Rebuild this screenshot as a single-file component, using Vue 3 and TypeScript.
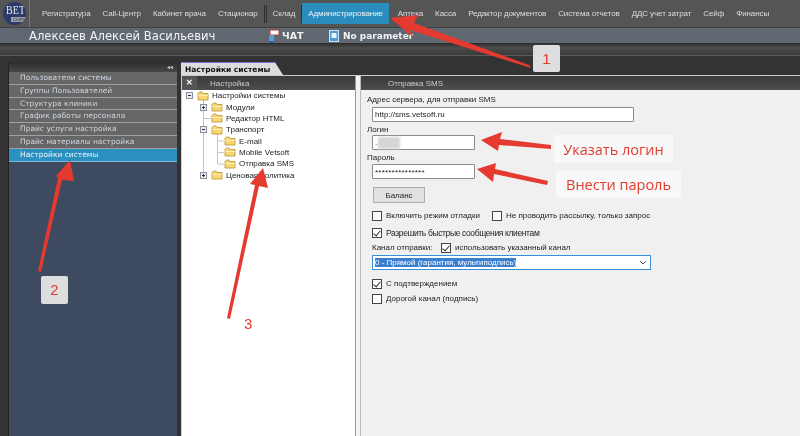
<template>
  <div class="app">
    <header class="topbar">
      <div class="logo">
        <span class="logo-bet">BET</span>
        <span class="logo-sub">СОФТ</span>
      </div>
      <nav class="nav">
        <template v-for="item in navItems" :key="item.label">
          <span v-if="item.sep" class="nav-sep" :class="item.sep" />
          <a class="nav-item" :class="{ active: item.active }">{{ item.label }}</a>
        </template>
      </nav>
    </header>

    <div class="namebar">
      <span class="user-name">Алексеев Алексей Васильевич</span>
      <span class="chat">
        <svg width="13" height="14" viewBox="0 0 13 14">
          <rect x="3" y="1" width="9" height="5" rx="1" fill="#fff" stroke="#c0392b" />
          <rect x="2" y="6" width="5" height="6" fill="#5b9bd5" />
          <rect x="3" y="12" width="3" height="2" fill="#2d5f96" />
        </svg>
        ЧАТ
      </span>
      <span class="param">
        <svg width="10" height="12" viewBox="0 0 10 12">
          <rect x="0.5" y="0.5" width="9" height="11" fill="#4f9ad8" stroke="#cfe4f5" />
          <rect x="2.5" y="3" width="5" height="5" fill="#e8f3fb" />
        </svg>
        No parameter
      </span>
    </div>
    <div class="band" />

    <main class="content">
      <aside class="sidebar">
        <div class="side-head"><span class="collapse">◂◂</span></div>
        <ul class="side-list">
          <li v-for="m in menu" :key="m" class="side-item" :class="{ selected: m === 'Настройки системы' }">{{ m }}</li>
        </ul>
      </aside>

      <section class="workspace">
        <div class="tab">Настройки системы</div>
        <div class="panes">
          <div class="tree-pane">
            <div class="pane-head">
              <span class="close">✕</span>
              <span class="tree-title">Настройка</span>
            </div>
            <div class="tree">
              <svg class="tree-lines" width="60" height="90" viewBox="0 0 60 90">
                <path
                  d="M21.5 10V85M21.5 28.5H29M35.5 44V74M35.5 51H42M35.5 62.5H42M35.5 74H42"
                  stroke="#c4c4c4"
                  fill="none"
                />
              </svg>
              <div v-for="row in tree" :key="row.label" class="tree-row" :class="'depth-' + row.depth">
                <span class="expander" :class="{ hidden: !row.toggle }">
                  <svg width="7" height="7" viewBox="0 0 7 7">
                    <rect x="0.5" y="0.5" width="6" height="6" fill="#e8edf5" stroke="#8a8f9a" />
                    <path d="M2 3.5H5" stroke="#334" />
                    <path v-if="row.toggle === 'plus'" d="M3.5 2V5" stroke="#334" />
                  </svg>
                </span>
                <svg class="folder" width="12" height="10" viewBox="0 0 12 10">
                  <path d="M1 2.5 2.5 1H5L6 2.5H11V9H1Z" fill="#f7d774" stroke="#b8932e" stroke-width="0.8" />
                  <path d="M1 4.5H11" stroke="#fff3c0" stroke-width="0.8" />
                </svg>
                <span class="tree-label">{{ row.label }}</span>
              </div>
            </div>
          </div>

          <div class="splitter" />

          <div class="form-pane">
            <div class="pane-head form-head">Отправка SMS</div>
            <form class="form" @submit.prevent>
              <label class="lbl">Адрес сервера, для отправки SMS</label>
              <div class="input url">http://sms.vetsoft.ru</div>
              <label class="lbl lbl-next">Логин</label>
              <div class="input short"><span class="masked-dot">.</span><span class="masked" /></div>
              <label class="lbl lbl-next">Пароль</label>
              <div class="input short pass">***************</div>
              <button class="btn" type="button">Баланс</button>

              <div class="check-row first">
                <span class="check-item debug"><i class="box" />Включить режим отладки</span>
                <span class="check-item"><i class="box" />Не проводить рассылку, только запрос</span>
              </div>
              <div class="check-row">
                <span class="check-item wide"><i class="box on" />Разрешить быстрые сообщения клиентам</span>
              </div>
              <div class="channel-row">
                <span class="channel-lbl">Канал отправки:</span>
                <span class="check-item"><i class="box on" />использовать указанный канал</span>
              </div>
              <div class="select">
                <span class="select-value">0 - Прямой (гарантия, мультиподпись)</span>
                <svg width="8" height="5" viewBox="0 0 8 5"><path d="M1 1 4 4 7 1" stroke="#555" fill="none" /></svg>
              </div>
              <div class="check-row confirm">
                <span class="check-item"><i class="box on" />С подтверждением</span>
              </div>
              <div class="check-row tight">
                <span class="check-item"><i class="box" />Дорогой канал (подпись)</span>
              </div>
            </form>
          </div>
        </div>
      </section>
    </main>

    <!-- пометки поверх скриншота -->
    <svg class="arrows" width="800" height="436" viewBox="0 0 800 436">
      <g v-for="a in arrows" :key="a" fill="#e53a2f">
        <polygon :points="a" />
      </g>
    </svg>
    <span class="badge b1">1</span>
    <span class="badge b2">2</span>
    <span class="step3">3</span>
    <span class="note n1">Указать логин</span>
    <span class="note n2">Внести пароль</span>
  </div>
</template>

<script setup lang="ts">
interface NavItem {
  label: string
  active?: boolean
  sep?: 'double' | 'single'
}

interface TreeRow {
  label: string
  depth: number
  toggle?: 'plus' | 'minus'
}

const navItems: NavItem[] = [
  { label: 'Регистратура' },
  { label: 'Call-Центр' },
  { label: 'Кабинет врача' },
  { label: 'Стационар' },
  { label: 'Склад', sep: 'double' },
  { label: 'Администрирование', active: true, sep: 'single' },
  { label: 'Аптека' },
  { label: 'Касса' },
  { label: 'Редактор документов' },
  { label: 'Система отчетов' },
  { label: 'ДДС учет затрат' },
  { label: 'Сейф' },
  { label: 'Финансы' }
]

const menu = [
  'Пользователи системы',
  'Группы Пользователей',
  'Структура клиники',
  'График работы персонала',
  'Прайс услуги настройка',
  'Прайс материалы настройка',
  'Настройки системы'
]

const tree: TreeRow[] = [
  { label: 'Настройки системы', depth: 0, toggle: 'minus' },
  { label: 'Модули', depth: 1, toggle: 'plus' },
  { label: 'Редактор HTML', depth: 1 },
  { label: 'Транспорт', depth: 1, toggle: 'minus' },
  { label: 'E-mail', depth: 2 },
  { label: 'Mobile Vetsoft', depth: 2 },
  { label: 'Отправка SMS', depth: 2 },
  { label: 'Ценовая политика', depth: 1, toggle: 'plus' }
]

const arrows = [
  '529,65 531,68 410,30 413,37 390,18 418,15 414,23',
  '38,271 41,272 62,180 74,181 70,160 56,176 58,178',
  '227,318 230,319 259,186 268,188 263,168 250,184 255,185',
  '551,145 551,149 499,145 498,151 481,140 502,132 500,139',
  '548,181 547,185 494,174 493,182 477,169 496,163 495,169'
]
</script>

<style>
html,
body {
  margin: 0;
  background: #333;
}
</style>

<style scoped>
.app {
  position: relative;
  width: 800px;
  height: 436px;
  overflow: hidden;
  display: flex;
  flex-direction: column;
  background: #333;
  font-family: 'Liberation Sans', Arial, sans-serif;
  font-size: 8px;
  filter: blur(0.3px);
}
.topbar {
  height: 27px;
  flex: none;
  display: flex;
  align-items: center;
  background: #555;
  border-bottom: 1px solid #404040;
}
.logo {
  width: 23px;
  height: 23px;
  margin: 0 3px 0 3px;
  border-radius: 50%;
  background: #2c3a68;
  display: flex;
  flex-direction: column;
  align-items: flex-end;
  overflow: hidden;
  flex: none;
}
.logo-bet {
  font-family: 'Liberation Serif', serif;
  font-size: 10px;
  line-height: 11px;
  margin-top: 2px;
  padding-right: 1px;
  color: #e6e6ea;
  transform: scaleY(1.2);
}
.logo-sub {
  font-size: 4px;
  line-height: 5px;
  margin-top: 2px;
  width: 15px;
  text-align: center;
  background: #9aa0ac;
  color: #223;
}
.nav {
  height: 27px;
  flex: 1;
  display: flex;
  align-items: center;
  padding-left: 6px;
  border-left: 1px solid #777;
  color: #ddd;
  letter-spacing: -0.1px;
}
.nav-item {
  padding: 0 6px;
  white-space: nowrap;
}
.nav-item.active {
  height: 21px;
  line-height: 21px;
  margin-right: 3px;
  background: #2b8dbd;
  color: #e8f2f8;
}
.nav-sep {
  height: 18px;
  border-left: 1px solid #2e2e2e;
}
.nav-sep.double {
  width: 1px;
  border-right: 1px solid #2e2e2e;
}
.nav-sep.single {
  width: 0;
}
.namebar {
  height: 15px;
  flex: none;
  display: flex;
  align-items: center;
  background: #5f6871;
  color: #f2f2f2;
  font-family: 'DejaVu Sans', sans-serif;
  font-size: 11.6px;
}
.user-name {
  margin-left: 29px;
  width: 238px;
  white-space: nowrap;
}
.chat {
  width: 62px;
  display: flex;
  align-items: center;
  gap: 2px;
  font-weight: 700;
  font-size: 9.5px;
}
.param {
  display: flex;
  align-items: center;
  gap: 4px;
  font-weight: 700;
  font-size: 9px;
}
.band {
  height: 12px;
  flex: none;
  background: linear-gradient(#2c2c2c, #4c4c4c 40%, #3a3a3a);
  border-bottom: 1px solid #5c5c5c;
}
.content {
  flex: 1;
  min-height: 0;
  display: flex;
  padding: 6px 0 0 8px;
  background: #333;
}
.sidebar {
  width: 168px;
  flex: none;
  display: flex;
  flex-direction: column;
  background: #3d4a60;
  border-left: 1px solid #222;
}
.side-head {
  height: 10px;
  flex: none;
  background: linear-gradient(#2e2e2e, #474747);
  color: #ccc;
  font-size: 6px;
  line-height: 10px;
  text-align: right;
  padding-right: 4px;
}
.side-list {
  list-style: none;
  margin: 0;
  padding: 0;
}
.side-item {
  height: 11.8px;
  line-height: 12px;
  padding-left: 11px;
  background: #666;
  border-bottom: 1px solid #a0a0a0;
  color: #cdd6de;
  font-family: 'DejaVu Sans', sans-serif;
  font-size: 7.5px;
}
.side-item.selected {
  background: #2a90c0;
  color: #eef6fb;
  border-bottom-color: #7fb8d6;
}
.workspace {
  flex: 1;
  min-width: 0;
  display: flex;
  flex-direction: column;
  padding-left: 4px;
}
.tab {
  width: 98px;
  height: 12px;
  flex: none;
  padding-left: 4px;
  line-height: 13px;
  font-family: 'DejaVu Sans', sans-serif;
  font-size: 7.5px;
  font-weight: 700;
  color: #111;
  background: #dcdcdc;
  border-top: 1px solid #7a78d8;
  clip-path: polygon(0 0, 92% 0, 100% 100%, 0 100%);
}
.panes {
  flex: 1;
  min-height: 0;
  display: flex;
  border-top: 1px solid #ccc;
}
.tree-pane {
  width: 173px;
  flex: none;
  display: flex;
  flex-direction: column;
  background: #fff;
  border-left: 1px solid #d0d0d0;
}
.pane-head {
  height: 14px;
  flex: none;
  display: flex;
  align-items: center;
  background: linear-gradient(#3a3a3a, #4e4e4e);
  color: #ccc;
}
.close {
  width: 15px;
  height: 14px;
  line-height: 14px;
  text-align: center;
  background: #555;
  color: #fff;
  font-weight: 700;
}
.tree-title {
  margin-left: 13px;
}
.tree {
  position: relative;
}
.tree-lines {
  position: absolute;
  left: 0;
  top: 0;
}
.tree-row {
  position: relative;
  height: 11.35px;
  display: flex;
  align-items: center;
  color: #222;
}
.depth-0 {
  padding-left: 4px;
}
.depth-1 {
  padding-left: 18px;
}
.depth-2 {
  padding-left: 32px;
}
.expander {
  width: 7px;
  height: 7px;
  margin-right: 4px;
  display: flex;
}
.expander.hidden {
  visibility: hidden;
}
.folder {
  flex: none;
  margin-right: 3px;
}
.tree-label {
  white-space: nowrap;
}
.depth-2 .expander {
  width: 0;
  margin-right: 10px;
}
.splitter {
  width: 4px;
  flex: none;
  background: #f4f4f4;
  border-left: 1px solid #999;
  border-right: 1px solid #bbb;
}
.form-pane {
  flex: 1;
  min-width: 0;
  display: flex;
  flex-direction: column;
  background: #f0f0f0;
}
.form-head {
  padding-left: 27px;
}
.form {
  display: flex;
  flex-direction: column;
  align-items: flex-start;
  padding: 4px 0 0 6px;
  color: #222;
}
.lbl {
  height: 11px;
  line-height: 11px;
}
.lbl-next {
  margin-top: 2px;
}
.input {
  box-sizing: border-box;
  height: 15px;
  margin-left: 5px;
  padding-left: 2px;
  display: flex;
  align-items: center;
  background: #fff;
  border: 1px solid #8a8a8a;
  border-radius: 1px;
}
.url {
  width: 262px;
  margin-top: 2px;
}
.short {
  width: 103px;
}
.pass {
  margin-top: 1px;
  line-height: 12px;
  padding-top: 2px;
  letter-spacing: 0.2px;
}
.masked-dot {
  margin-right: 1px;
}
.masked {
  width: 22px;
  height: 12px;
  background: #d6d6d6;
  filter: blur(1px);
}
.btn {
  width: 52px;
  height: 16px;
  margin: 8px 0 0 6px;
  padding: 0;
  font: inherit;
  color: #222;
  background: #e1e1e1;
  border: 1px solid #adadad;
}
.check-row {
  margin: 4px 0 0 5px;
  display: flex;
}
.check-row.first {
  margin-top: 6px;
}
.check-row.confirm {
  margin-top: 7px;
}
.check-row.tight {
  margin-top: 2px;
}
.check-item {
  display: flex;
  align-items: center;
  height: 13px;
  white-space: nowrap;
}
.check-item.wide {
  font-size: 8.5px;
  letter-spacing: -0.37px;
}
.debug {
  width: 120px;
}
.box {
  position: relative;
  box-sizing: border-box;
  width: 10px;
  height: 10px;
  margin-right: 4px;
  background: #fff;
  border: 1px solid #444;
  flex: none;
}
.box.on::after {
  content: '';
  position: absolute;
  left: 2px;
  top: 0;
  width: 3px;
  height: 6px;
  border: solid #333;
  border-width: 0 1px 1px 0;
  transform: rotate(40deg);
}
.channel-row {
  margin: 2px 0 0 5px;
  display: flex;
  align-items: center;
  height: 13px;
}
.channel-lbl {
  width: 69px;
}
.select {
  box-sizing: border-box;
  width: 279px;
  height: 15px;
  margin: 1px 0 0 5px;
  padding: 0 3px 0 2px;
  display: flex;
  align-items: center;
  justify-content: space-between;
  background: #fff;
  border: 1px solid #3a8fd9;
}
.select-value {
  background: #3a7fd0;
  color: #fff;
}
.arrows {
  position: absolute;
  left: 0;
  top: 0;
}
.badge {
  position: absolute;
  width: 27px;
  height: 27px;
  line-height: 27px;
  text-align: center;
  border-radius: 2px;
  background: #dcdee0;
  color: #e53a2f;
  font-size: 15px;
}
.b1 {
  left: 533px;
  top: 45px;
}
.b2 {
  left: 41px;
  top: 276px;
  height: 28px;
  line-height: 28px;
}
.step3 {
  position: absolute;
  left: 244px;
  top: 315px;
  color: #e53a2f;
  font-size: 15px;
}
.note {
  position: absolute;
  display: flex;
  align-items: center;
  justify-content: center;
  border-radius: 2px;
  background: #f8f8f8;
  color: #e53a2f;
  font-family: 'Open Sans', sans-serif;
  font-size: 14.5px;
}
.n1 {
  left: 554px;
  top: 135px;
  width: 119px;
  height: 28px;
}
.n2 {
  left: 556px;
  top: 171px;
  width: 125px;
  height: 27px;
}
</style>
